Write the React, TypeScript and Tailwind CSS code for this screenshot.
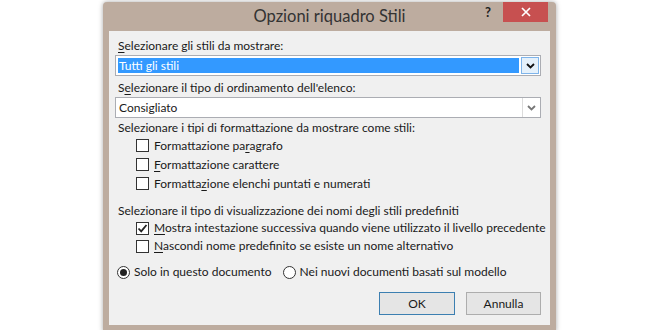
import React from "react";

const font = { fontFamily: 'Lato, "Noto Sans", sans-serif' };

function U({ c }: { c: string }) {
  return <span className="underline underline-offset-[2px]">{c}</span>;
}

function Check({ checked, children }: { checked?: boolean; children: React.ReactNode }) {
  return (
    <div className="flex items-center pl-[21px] whitespace-nowrap">
      <div className="w-[13px] h-[13px] border border-[#333] bg-white flex items-center justify-center shrink-0">
        {checked && (
          <svg width="11" height="11" viewBox="0 0 11 11">
            <path d="M1.5 5.5 L4.2 8.3 L9.5 2" fill="none" stroke="#222" strokeWidth="1.8" />
          </svg>
        )}
      </div>
      <span className="ml-[5px]">{children}</span>
    </div>
  );
}

function Radio({ checked, children }: { checked?: boolean; children: React.ReactNode }) {
  return (
    <div className="flex items-center whitespace-nowrap">
      <div className="w-[13px] h-[13px] rounded-full border border-[#333] bg-white flex items-center justify-center shrink-0">
        {checked && <div className="w-[7px] h-[7px] rounded-full bg-[#222]" />}
      </div>
      <span className="ml-[4px]">{children}</span>
    </div>
  );
}

function Chevron({ color }: { color: string }) {
  return (
    <svg width="9" height="6" viewBox="0 0 9 6">
      <path d="M1 1 L4.5 4.5 L8 1" fill="none" stroke={color} strokeWidth="1.8" />
    </svg>
  );
}

export default function App() {
  return (
    <div className="w-[660px] h-[330px] bg-white overflow-hidden" style={font}>
      <div className="ml-[103px] mt-[2px] w-[453px] h-[330px] bg-[#bdac9f] rounded-t-[4px] shadow-[0_0_5px_rgba(0,0,0,0.35)] flex flex-col relative text-[12px] text-[#1a1a1a]">
        <div className="h-[29px] flex items-center justify-center text-[16.5px] text-[#333] pb-[1px]">
          Opzioni riquadro Stili
        </div>
        <div className="absolute top-0 right-[8px] flex items-start">
          <div className="w-[20px] h-[20px] flex items-center justify-center text-[13px] font-bold text-[#222] mr-[5px] pt-[2px]">?</div>
          <div className="w-[45px] h-[20px] bg-[#c75050] flex items-center justify-center">
            <svg width="10" height="10" viewBox="0 0 10 10">
              <path d="M1 1 L9 9 M9 1 L1 9" stroke="white" strokeWidth="1.7" />
            </svg>
          </div>
        </div>
        <div className="mx-[6px] bg-[#f0f0f0] flex-1 flex flex-col pl-[6px] pr-[9px] pt-[7px] leading-[16px] whitespace-nowrap">
          <div className="h-[16px] pl-[3px]">
            <U c="S" />elezionare gli stili da mostrare:
          </div>
          <div className="mt-[1px] h-[21px] border border-[#abadb3] bg-white flex items-stretch">
            <div className="flex-1 m-[2px] bg-[#3399ff] text-white flex items-center pl-[1px]">Tutti gli stili</div>
            <div className="w-[18px] my-[1px] mr-[1px] bg-[#e5f1fb] border border-[#7eb4ea] flex items-center justify-center">
              <Chevron color="#111" />
            </div>
          </div>
          <div className="mt-[4px] h-[16px] pl-[3px]">
            S<U c="e" />lezionare il tipo di ordinamento dell'elenco:
          </div>
          <div className="mt-[1px] h-[21px] border border-[#abadb3] bg-white flex items-stretch">
            <div className="flex-1 flex items-center pl-[3px]">Consigliato</div>
            <div className="w-[18px] border-l border-[#dcdcdc] flex items-center justify-center">
              <Chevron color="#777" />
            </div>
          </div>
          <div className="mt-[2px] h-[16px] pl-[3px]">
            Selezionare i tipi di formattazione da mostrare come stili:
          </div>
          <div className="flex flex-col">
            <div className="h-[19px] flex items-center">
              <Check>
                Formattazione pa<U c="r" />agrafo
              </Check>
            </div>
            <div className="h-[19px] flex items-center">
              <Check>
                <U c="F" />ormattazione carattere
              </Check>
            </div>
            <div className="h-[19px] flex items-center">
              <Check>
                Formatta<U c="z" />ione elenchi puntati e numerati
              </Check>
            </div>
          </div>
          <div className="mt-[10px] h-[16px] pl-[3px]">
            Selezionare il tipo di visualizzazione dei nomi degli stili predefiniti
          </div>
          <div className="h-[18px] flex items-center">
            <Check checked>
              <U c="M" />ostra intestazione successiva quando viene utilizzato il livello precedente
            </Check>
          </div>
          <div className="h-[18px] flex items-center">
            <Check>
              <U c="N" />ascondi nome predefinito se esiste un nome alternativo
            </Check>
          </div>
          <div className="mt-[9px] h-[16px] flex items-center pl-[2px] gap-[11px]">
            <Radio checked>Solo in questo documento</Radio>
            <Radio>Nei nuovi documenti basati sul modello</Radio>
          </div>
          <div className="mt-[12px] flex justify-end gap-[11px]">
            <div className="w-[76px] h-[23px] border border-[#3c7fb1] bg-[#e5e5e5] flex items-center justify-center">OK</div>
            <div className="w-[75px] h-[23px] border border-[#adadad] bg-[#e5e5e5] flex items-center justify-center">Annulla</div>
          </div>
        </div>
        <div className="h-[7px]" />
      </div>
    </div>
  );
}
